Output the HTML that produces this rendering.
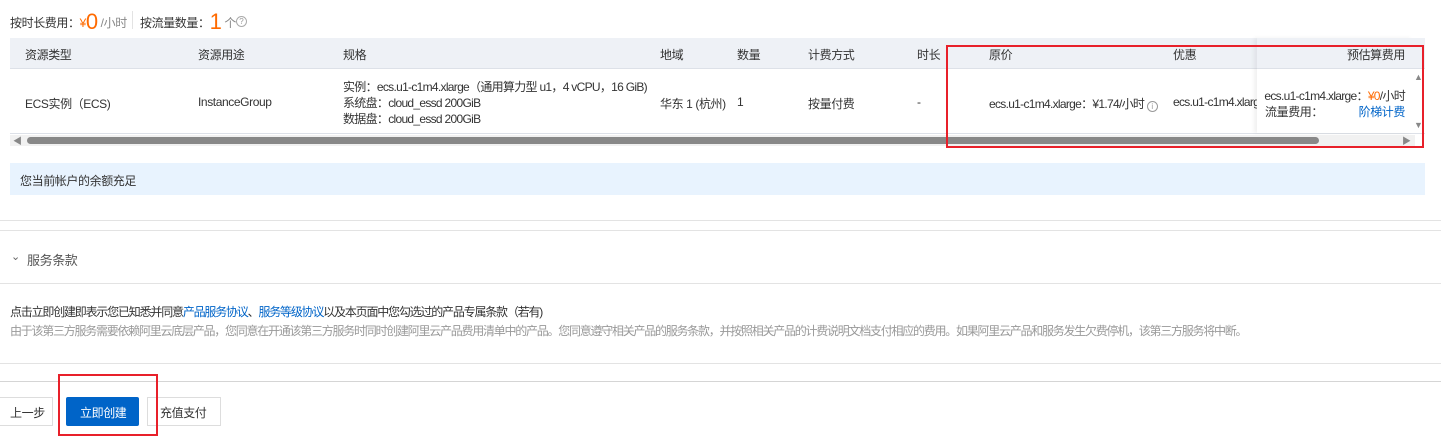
<!DOCTYPE html>
<html><head><meta charset="utf-8"><style>
*{margin:0;padding:0;box-sizing:border-box}
body{width:1441px;height:436px;background:#fff;position:relative;overflow:hidden;font-family:"Liberation Sans","Noto Sans CJK SC",sans-serif;font-size:12px;color:#333;letter-spacing:-0.4px}
.a{position:absolute;white-space:nowrap}
.or{color:#ff6a00}
.bl{color:#0064c8}
.hl{position:absolute;height:1px;background:#e3e3e3}
.red{position:absolute;border:2px solid #e8202a}
</style></head><body>
<div class="a" style="left:10px;top:12px;line-height:16px">按时长费用：<span class="or">¥</span><span class="or" style="font-size:22px;position:relative;top:2px">0</span> <span style="color:#888">/小时</span></div>
<div style="position:absolute;left:132px;top:11px;width:1px;height:18px;background:#e3e3e3"></div>
<div class="a" style="left:140px;top:12px;line-height:16px">按流量数量：<span class="or" style="font-size:22px;position:relative;top:2px">1</span> <span style="color:#888">个</span></div>
<div class="a" style="left:236px;top:16px;width:11px;height:11px;border:1px solid #aaa;border-radius:50%;font-size:8px;line-height:9px;text-align:center;color:#999;letter-spacing:0">?</div>

<div style="position:absolute;left:10px;top:38px;width:1415px;height:30px;background:#eef1f6"></div>
<div class="hl" style="left:10px;top:68px;width:1415px;background:#dde1e8"></div>
<div class="hl" style="left:10px;top:133px;width:1415px;background:#dde1e8"></div>
<div class="a" style="left:25px;top:46px">资源类型</div>
<div class="a" style="left:198px;top:46px">资源用途</div>
<div class="a" style="left:343px;top:46px">规格</div>
<div class="a" style="left:660px;top:46px">地域</div>
<div class="a" style="left:737px;top:46px">数量</div>
<div class="a" style="left:808px;top:46px">计费方式</div>
<div class="a" style="left:917px;top:46px">时长</div>
<div class="a" style="left:989px;top:46px">原价</div>
<div class="a" style="left:1173px;top:46px">优惠</div>
<div class="a" style="left:25px;top:95px">ECS实例（ECS)</div>
<div class="a" style="left:198px;top:95px">InstanceGroup</div>
<div class="a" style="left:343px;top:79px;line-height:16px;letter-spacing:-0.7px">实例：ecs.u1-c1m4.xlarge（通用算力型 u1，4 vCPU，16 GiB)<br>系统盘：cloud_essd 200GiB<br>数据盘：cloud_essd 200GiB</div>
<div class="a" style="left:660px;top:95px">华东 1 (杭州)</div>
<div class="a" style="left:737px;top:95px">1</div>
<div class="a" style="left:808px;top:95px">按量付费</div>
<div class="a" style="left:917px;top:95px">-</div>
<div class="a" style="left:989px;top:95px;letter-spacing:-0.7px">ecs.u1-c1m4.xlarge：¥1.74/小时 <span style="display:inline-block;width:11px;height:11px;border:1px solid #999;border-radius:50%;font-size:8px;line-height:9px;text-align:center;color:#999;vertical-align:-1px;letter-spacing:0">i</span></div>
<div class="a" style="left:1173px;top:95px;letter-spacing:-0.7px">ecs.u1-c1m4.xlarg</div>
<div style="position:absolute;left:1257px;top:38px;width:156px;height:95px;background:#fff;box-shadow:-3px 0 4px rgba(0,0,0,.06)"></div>
<div style="position:absolute;left:1257px;top:38px;width:168px;height:30px;background:#eef1f6"></div>
<div class="hl" style="left:1257px;top:68px;width:168px;background:#dde1e8"></div>
<div class="a" style="right:36px;top:46px">预估算费用</div>
<div class="a" style="right:36px;top:87px;letter-spacing:-0.7px">ecs.u1-c1m4.xlarge：<span class="or">¥0</span>/小时</div>
<div class="a" style="left:1265px;top:103px">流量费用：</div>
<div class="a bl" style="right:36px;top:103px">阶梯计费</div>
<div class="a" style="left:1414px;top:72px;font-size:9px;color:#888">▲</div>
<div class="a" style="left:1414px;top:120px;font-size:9px;color:#888">▼</div>
<div style="position:absolute;left:10px;top:135px;width:1405px;height:11px;background:#f1f1f1"></div>
<div style="position:absolute;left:27px;top:137px;width:1292px;height:7px;background:#888;border-radius:4px"></div>
<div class="a" style="left:13px;top:134px;font-size:9px;color:#888">◀</div>
<div class="a" style="left:1402px;top:134px;font-size:9px;color:#888">▶</div>
<div class="red" style="left:946px;top:45px;width:478px;height:103px"></div>

<div style="position:absolute;left:10px;top:163px;width:1415px;height:32px;background:#e8f3fe"></div>
<div class="a" style="left:20px;top:172px">您当前帐户的余额充足</div>
<div class="hl" style="left:0;top:220px;width:1441px"></div>
<div class="hl" style="left:0;top:230px;width:1441px"></div>
<div class="a" style="left:11px;top:250px;font-size:11px;color:#666">⌄</div>
<div class="a" style="left:27px;top:250px;font-size:13px;color:#555">服务条款</div>
<div class="hl" style="left:0;top:283px;width:1441px"></div>
<div class="a" style="left:10px;top:303px;letter-spacing:-1.2px">点击立即创建即表示您已知悉并同意<span class="bl">产品服务协议</span>、<span class="bl">服务等级协议</span>以及本页面中您勾选过的产品专属条款（若有)</div>
<div class="a" style="left:10px;top:322px;color:#999;letter-spacing:-1.25px">由于该第三方服务需要依赖阿里云底层产品，您同意在开通该第三方服务时同时创建阿里云产品费用清单中的产品。您同意遵守相关产品的服务条款，并按照相关产品的计费说明文档支付相应的费用。如果阿里云产品和服务发生欠费停机，该第三方服务将中断。</div>
<div class="hl" style="left:0;top:363px;width:1441px"></div>
<div class="hl" style="left:0;top:381px;width:1441px;background:#d5d5d5"></div>
<div style="position:absolute;left:-2px;top:397px;width:55px;height:29px;border:1px solid #ddd;background:#fff"></div>
<div class="a" style="left:10px;top:404px">上一步</div>
<div style="position:absolute;left:66px;top:397px;width:73px;height:29px;background:#0064c8;border-radius:2px"></div>
<div class="a" style="left:80px;top:404px;color:#fff">立即创建</div>
<div style="position:absolute;left:147px;top:397px;width:74px;height:29px;border:1px solid #ddd;background:#fff"></div>
<div class="a" style="left:160px;top:404px">充值支付</div>
<div class="red" style="left:58px;top:374px;width:100px;height:62px"></div>
</body></html>
